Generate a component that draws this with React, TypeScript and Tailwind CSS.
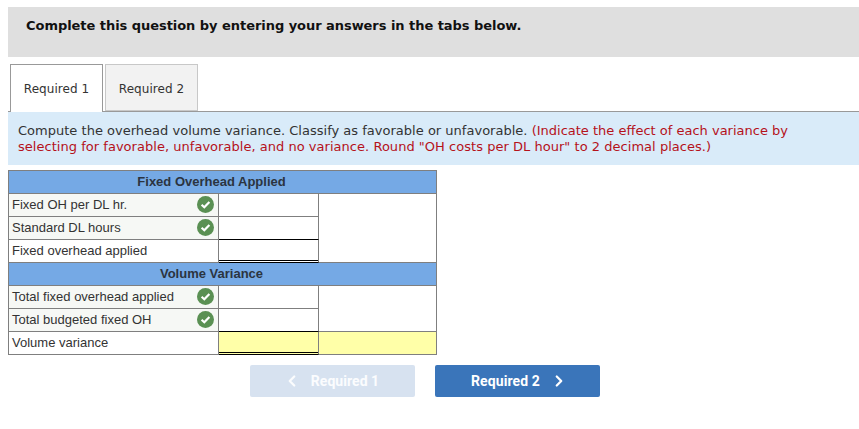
import { ChevronLeft, ChevronRight } from "lucide-react";

function Check() {
    return (
        <svg width="17" height="17" viewBox="0 0 17 17">
            <circle cx="8.5" cy="8.5" r="8.5" fill="#5a9053" />
            <path d="M4.6 8.8 L7.3 11.3 L12.4 6" fill="none" stroke="#fff" strokeWidth="2.2" />
        </svg>
    );
}

type RowProps = {
    label: string;
    checked?: boolean;
    total?: boolean;
    yellow?: boolean;
    topBlack?: boolean;
};

function Row({ label, checked, total, yellow, topBlack }: RowProps) {
    return (
        <div className="flex h-[23px]">
            <div className={`flex w-[210px] items-center justify-between border-r border-b border-[#7f7f7f] pb-[1px] pl-[3px] pr-[4px] ${checked ? "bg-[#f6f8f5]" : "bg-white"}`}>
                <span>{label}</span>
                {checked && <Check />}
            </div>
            <div className={`w-[100px] border-r border-r-[#7f7f7f] border-b ${total || topBlack ? "border-b-black" : "border-b-[#7f7f7f]"} ${yellow ? "bg-[#ffffa8]" : "bg-white"}`}>
                {total && <div className="h-[21px] border-b border-black" />}
            </div>
        </div>
    );
}

function Section({ title, children, right }: { title: string; children: React.ReactNode; right: React.ReactNode }) {
    return (
        <>
            <div className="flex h-[23px] items-center justify-center border-b border-[#7f7f7f] bg-[#75a9e5] pb-[1px] pr-[22px] font-bold text-[#2b3440]">
                {title}
            </div>
            <div className="flex">
                <div className="w-[310px]">{children}</div>
                <div className="flex flex-1 flex-col">{right}</div>
            </div>
        </>
    );
}

export default function App() {
    return (
        <div className="h-[429px] w-[859px] overflow-hidden bg-white pt-[7px] font-['Liberation_Sans',sans-serif] text-[13px] text-[#333]">
            <div className="ml-2 h-[50px] bg-[#dfdfdf] pl-[18px] pt-[9px] font-['DejaVu_Sans',sans-serif] text-[13px] font-bold tracking-[-0.045px] text-[#111]">
                Complete this question by entering your answers in the tabs below.
            </div>

            <div className="ml-2 mt-[7px] flex h-[48px] gap-[2px] border-b border-[#999] pl-[2px] font-['DejaVu_Sans',sans-serif] text-[12px]">
                <div className="flex h-[48px] w-[93px] items-center justify-center border border-b-0 border-[#999] bg-white pt-[1px] tracking-[0.05px] text-[#333]">
                    Required 1
                </div>
                <div className="flex h-[47px] w-[93px] items-center justify-center border border-[#c8c8c8] bg-[#f2f2f2] pt-[2px] tracking-[0.05px] text-[#333]">
                    Required 2
                </div>
            </div>

            <div className="ml-2 h-[53px] bg-[#d9ebf9] px-[10px] pt-[11px] font-['DejaVu_Sans',sans-serif] text-[13px] leading-[16px] text-[#333]">
                <div className="whitespace-nowrap">
                    <span className="tracking-[0.013px]">Compute the overhead volume variance. Classify as favorable or unfavorable.</span>{" "}
                    <span className="text-[#b5121b]">(Indicate the effect of each variance by</span>
                </div>
                <div className="whitespace-nowrap tracking-[0.03px] text-[#b5121b]">
                    selecting for favorable, unfavorable, and no variance. Round "OH costs per DL hour" to 2 decimal places.)
                </div>
            </div>

            <div className="ml-2 mt-[5px] w-[429px] border border-b-0 border-[#7f7f7f]">
                <Section
                    title="Fixed Overhead Applied"
                    right={<div className="h-[69px] border-b border-[#7f7f7f] bg-white" />}
                >
                    <Row label="Fixed OH per DL hr." checked />
                    <Row label="Standard DL hours" checked topBlack />
                    <Row label="Fixed overhead applied" total />
                </Section>
                <Section
                    title="Volume Variance"
                    right={
                        <>
                            <div className="h-[46px] border-b border-[#7f7f7f] bg-white" />
                            <div className="h-[23px] border-b border-[#7f7f7f] bg-[#ffffa8]" />
                        </>
                    }
                >
                    <Row label="Total fixed overhead applied" checked />
                    <Row label="Total budgeted fixed OH" checked topBlack />
                    <Row label="Volume variance" total yellow />
                </Section>
            </div>

            <div className="ml-[250px] mt-[10px] flex gap-5 font-['Roboto',sans-serif] text-[14px] font-bold text-white">
                <button className="flex h-8 w-[165px] items-center justify-center gap-[10px] rounded-[2px] bg-[#d7e2f0] pr-[3px] tracking-[0.05px] text-white/90">
                    <ChevronLeft size={18} strokeWidth={3} />
                    Required 1
                </button>
                <button className="flex h-8 w-[165px] items-center justify-center gap-[10px] rounded-[2px] bg-[#3a75ba] pl-[4px] tracking-[0.1px]">
                    Required 2
                    <ChevronRight size={18} strokeWidth={3} />
                </button>
            </div>
        </div>
    );
}
